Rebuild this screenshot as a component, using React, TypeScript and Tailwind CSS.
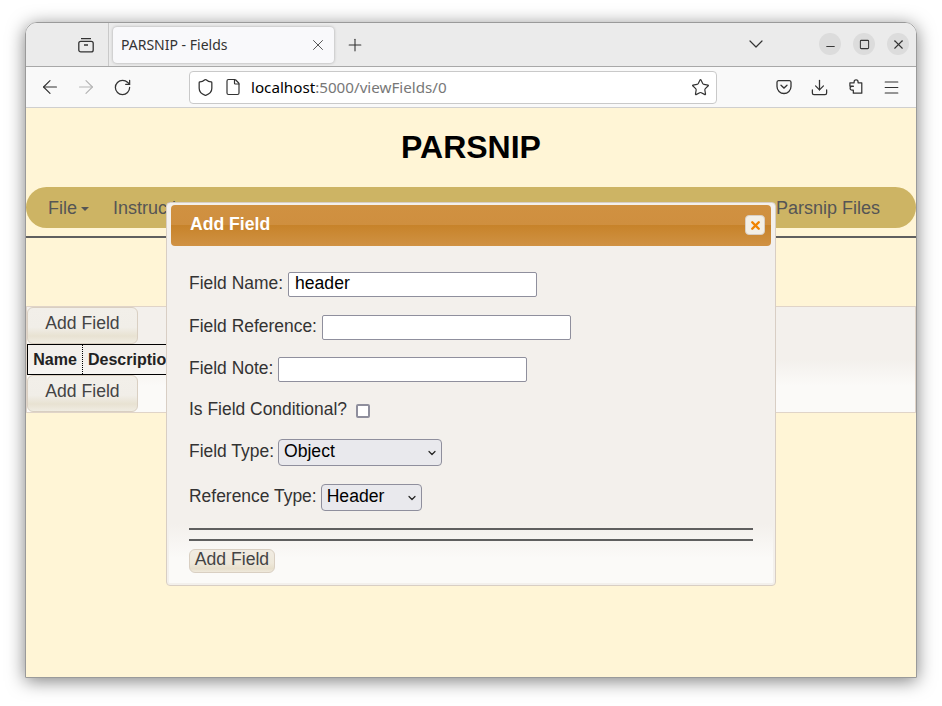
import { ArrowLeft, ArrowRight, ChevronDown, Download, File, Menu, Minus, Plus, RotateCw, Shield, Square, Star, X } from "lucide-react"

const sans = "font-['Liberation_Sans',Arial,sans-serif]"
const pageBtn = "block w-[111px] rounded-[6px] border border-[#d9cfc2] bg-[linear-gradient(#f2efe9_0%,#f1eee8_55%,#e8e2d2_80%,#f0ece2_100%)] text-[17.6px] text-[#444]"

function ArchiveIcon() {
  return (
    <svg width="16" height="16" viewBox="0 0 16 16" fill="none" stroke="#333" strokeWidth="1.3">
      <path d="M3 1.6h10" />
      <rect x="0.8" y="4.3" width="14.4" height="10.6" rx="2" />
      <path d="M6 8h4" />
    </svg>
  )
}

function PocketIcon() {
  return (
    <svg width="16" height="16" viewBox="0 0 16 16" fill="none" stroke="#333" strokeWidth="1.3">
      <path d="M2.5 1.7h11A1.6 1.6 0 0 1 15 3.3v4.2a7 7 0 0 1-14 0V3.3a1.6 1.6 0 0 1 1.5-1.6z" />
      <path d="M5 6.3l3 2.8 3-2.8" strokeLinecap="round" />
    </svg>
  )
}

function ExtensionIcon() {
  return (
    <svg width="16" height="16" viewBox="0 0 16 16" fill="none" stroke="#333" strokeWidth="1.3" strokeLinejoin="round">
      <path d="M6.2 3.6V2.7a2.1 2.1 0 0 1 4.2 0v.9h3.9v10.9H5.4v-3.1H4a2 2 0 0 1 0-4h1.4V7.1H1.8V3.6z" transform="translate(0.2 0.4) scale(0.95)" />
    </svg>
  )
}

function WindowButton({ children }: { children: React.ReactNode }) {
  return <div className="flex size-[22px] items-center justify-center rounded-full bg-[#dcdcdc] text-[#333]">{children}</div>
}

function TabStrip() {
  return (
    <div className="flex h-[44px] items-center border-b border-[#a8a8a8] bg-[#ebebeb]">
      <div className="flex h-full w-[83px] items-center justify-end border-r border-[#c9c9c9] pr-[14px]">
        <ArchiveIcon />
      </div>
      <div className="ml-1 flex h-[36px] w-[221px] items-center rounded-[4px] bg-[#f9f9fb] pl-2 pr-[7px] shadow-[0_0_3px_rgba(0,0,0,0.3)]">
        <span className="flex-1 font-['Noto_Sans',sans-serif] text-[14px] text-[#333]">PARSNIP - Fields</span>
        <X size={18} strokeWidth={1.1} className="text-[#333]" />
      </div>
      <Plus size={20} strokeWidth={1.3} className="ml-[11px] text-[#333]" />
      <ChevronDown size={24} strokeWidth={1.2} className="ml-[379px] mb-[2px] text-[#333]" />
      <div className="ml-[51px] flex gap-3 pb-[1px]">
        <WindowButton><Minus size={13} strokeWidth={1.8} className="mt-1" /></WindowButton>
        <WindowButton><Square size={11} strokeWidth={2.2} /></WindowButton>
        <WindowButton><X size={15} strokeWidth={1.7} /></WindowButton>
      </div>
    </div>
  )
}

function Toolbar() {
  return (
    <div className="flex h-[41px] items-center border-b border-[#cfcfcf] bg-[#f9f9f9] text-[#333]">
      <ArrowLeft size={22} strokeWidth={1.3} className="ml-[13px]" />
      <ArrowRight size={22} strokeWidth={1.3} className="ml-[14px] text-[#b5b5b5]" />
      <RotateCw size={19} strokeWidth={1.6} className="ml-[16px]" />
      <div className="ml-[57px] flex h-[33px] w-[528px] items-center rounded-[4px] border border-[#c9c9c9] bg-white pl-[6px] pr-[6px]">
        <Shield size={19} strokeWidth={1.6} />
        <File size={18} strokeWidth={1.6} className="ml-[9px]" />
        <span className="ml-[9px] flex-1 font-['Noto_Sans',sans-serif] text-[15.2px] text-black">
          localhost<span className="text-[#777]">:5000/viewFields/0</span>
        </span>
        <Star size={19} strokeWidth={1.5} />
      </div>
      <div className="ml-[59px]"><PocketIcon /></div>
      <Download size={19} strokeWidth={1.6} className="ml-[18px]" />
      <div className="ml-[19px]"><ExtensionIcon /></div>
      <Menu size={19} strokeWidth={1.4} className="ml-[18px]" />
    </div>
  )
}

function Page() {
  return (
    <div className={`${sans} h-[569px] bg-[#fff5d6]`}>
      <h1 className="pt-[21px] text-center text-[32px] font-bold leading-[37px] text-black">PARSNIP</h1>
      <nav className="mt-[21px] flex h-[41px] items-center rounded-full bg-[#cdb464] pl-[22px] pr-[36px] pt-[2px] text-[18px] text-[#555]">
        <span>File</span>
        <span className="ml-1 mt-[1px] size-0 border-x-[4px] border-t-[4px] border-x-transparent border-t-[#555]" />
        <span className="ml-[24px]">Instructions</span>
        <span className="ml-auto">Parsnip Files</span>
      </nav>
      <hr className="mt-2 border-t-2 border-[#5f5f5f]" />
      <section className="mt-[68px] h-[107px] border border-[#e0d4c8] bg-[linear-gradient(#f3f0ec_0%,#f3f0ec_50%,#fbfaf8_75%,#fbfaf8_100%)]">
        <button className={`${pageBtn} h-[37px] pb-[4px]`}>Add Field</button>
        <table className="w-[300px] border-collapse border border-black text-[16px] text-[#222]">
          <thead>
            <tr className="h-[30px]">
              <th className="w-[55px] border-r border-dotted border-black text-center">Name</th>
              <th className="pl-[5px] text-left">Description</th>
            </tr>
          </thead>
        </table>
        <button className={`${pageBtn} h-[37px] pb-[4px]`}>Add Field</button>
      </section>
    </div>
  )
}

function TextRow({ label, value, className }: { label: string; value?: string; className: string }) {
  return (
    <label className={`flex items-center ${className}`}>
      <span className="mb-[2px]">{label}</span>
      <input
        readOnly
        value={value ?? ""}
        className="ml-[5px] h-[25px] w-[249px] rounded-[2px] border border-[#8f8f9d] bg-white px-[6px] pb-[2px] text-[17.6px] text-black"
      />
    </label>
  )
}

function SelectRow({ label, value, width, className }: { label: string; value: string; width: string; className: string }) {
  return (
    <div className={`flex items-center ${className}`}>
      <span className="mb-[3px]">{label}</span>
      <div className={`ml-[4px] flex h-[27px] items-center justify-between rounded-[4px] border border-[#8f8f9d] bg-[#e9e9ed] pl-[5px] pr-[3px] ${width}`}>
        <span className="pb-[4px] text-[17.6px] leading-[20px] text-black">{value}</span>
        <ChevronDown size={12} strokeWidth={2.4} className="mt-[1px] text-[#222]" />
      </div>
    </div>
  )
}

function AddFieldDialog() {
  return (
    <div className={`${sans} absolute left-[140px] top-[179px] h-[384px] w-[610px] rounded-[4px] border border-[#d8cec4] bg-[linear-gradient(#f3f0ec_0%,#f3f0ec_84%,#fbfaf8_93%,#fbfaf8_100%)] text-[17.44px] text-[#333] ring-2 ring-inset ring-[#f3f0ec]`}>
      <div className="relative mx-[4px] mt-[2px] flex h-[41px] items-center rounded-[4px] bg-[linear-gradient(#d09141_0%,#cf8f3f_48%,#c7832a_50%,#d09244_100%)] pb-[3px] pl-[19px] text-[17.6px] font-bold text-white">
        Add Field
        <button className="absolute right-[6px] top-[10px] flex size-5 items-center justify-center rounded-[4px] border border-[#d8cec4] bg-[#f3efe6]">
          <X size={13} strokeWidth={4.5} className="text-[#f08300]" />
        </button>
      </div>
      <form className="flex flex-col px-[22px] pt-[26px]">
        <TextRow label="Field Name:" value="header" className="h-[25px]" />
        <TextRow label="Field Reference:" className="mt-[18px] h-[25px]" />
        <TextRow label="Field Note:" className="mt-[17px] h-[25px]" />
        <label className="mt-[19px] flex h-[17px] items-center">
          <span>Is Field Conditional?</span>
          <span className="ml-[9px] mt-[2px] size-[14px] rounded-[2px] border-2 border-[#8f8f9d] bg-white" />
        </label>
        <SelectRow label="Field Type:" value="Object" width="w-[164px]" className="mt-[20px]" />
        <SelectRow label="Reference Type:" value="Header" width="w-[101px]" className="mt-[16px]" />
        <hr className="mt-[16px] border-t-2 border-[#5f5f5f]" />
        <hr className="mt-[9px] border-t-2 border-[#5f5f5f]" />
        <button type="button" className="mt-[8px] h-[24px] w-[86px] rounded-[6px] border border-[#d9cfc2] bg-[linear-gradient(#f1ece2_0%,#eee8da_60%,#e7dfcc_85%,#efe9dc_100%)] pb-[3px] text-[17.6px] leading-[19px] text-[#444]">
          Add Field
        </button>
      </form>
    </div>
  )
}

export default function App() {
  return (
    <div className="h-[706px] overflow-hidden bg-white pl-[25px] pt-[22px]">
      <div className="relative h-[656px] w-[892px] overflow-hidden rounded-t-[12px] border border-[#9a9a9a] shadow-[0_3px_18px_rgba(0,0,0,0.5)]">
        <TabStrip />
        <Toolbar />
        <Page />
        <AddFieldDialog />
      </div>
    </div>
  )
}
